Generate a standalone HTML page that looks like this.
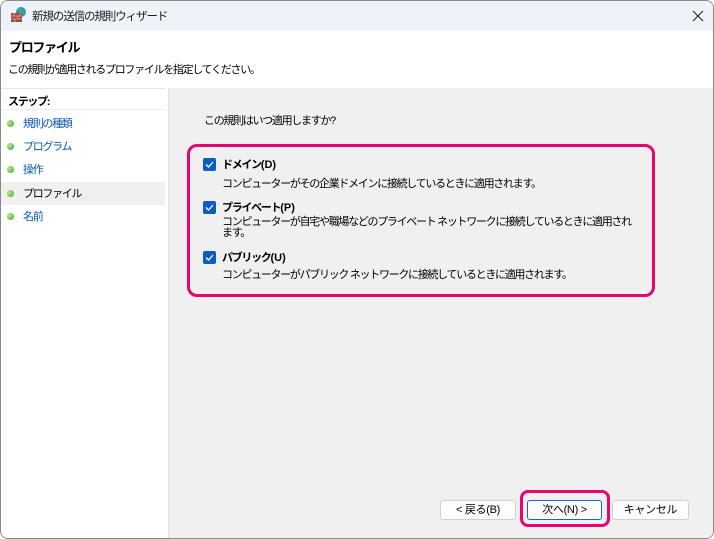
<!DOCTYPE html>
<html><head><meta charset="utf-8"><style>
*{margin:0;padding:0;box-sizing:border-box}
body{width:714px;height:539px;background:#fff;font-family:"Liberation Sans","Noto Sans CJK JP",sans-serif;font-size:11px;letter-spacing:-1.3px;color:#000;position:relative;overflow:hidden}
.win{position:absolute;left:0;top:0;width:714px;height:539px;border:1px solid #8a8a8a;border-radius:8px;overflow:hidden;background:#fff}
.title{position:absolute;left:0;top:0;width:712px;height:30px;background:#eef3f9}
.title span{position:absolute;left:31px;top:7px;font-size:11.5px;letter-spacing:-1.1px;color:#1a1a1a}
.abs{position:absolute;white-space:nowrap}
.left{position:absolute;left:0;top:87px;width:165px;height:450px;background:#fff;border-top:1px solid #e5e5e5}
.right{position:absolute;left:167px;top:87px;width:546px;height:450px;background:#f0f0f0;border-left:1px solid #e0e0e0}
.dot{position:absolute;left:6px;width:7px;height:7px;border-radius:50%;background:radial-gradient(circle at 35% 35%,#b6ec8a,#3fa02a)}
.lnk{color:#0a58b8}
.cb{position:absolute;width:13px;height:13px;background:#0b5cc4;border-radius:2px}
.cb svg{position:absolute;left:2px;top:3px}
.btn{position:absolute;top:499px;height:20px;border:1px solid #d0d0d0;border-radius:3px;background:#fdfdfd;text-align:center;line-height:18px;font-size:11px;letter-spacing:-0.3px}
.l{letter-spacing:0}
</style></head><body><div class="win">
<div class="title">
<svg style="position:absolute;left:9px;top:5px" width="17" height="17" viewBox="0 0 17 17">
<circle cx="11" cy="6" r="5" fill="#2c8fd8"/><path d="M8 3q3 1 5 4M9 9q3-3 6-2" stroke="#4db34a" stroke-width="2" fill="none"/>
<rect x="1" y="7" width="11" height="9" fill="#a8453a"/><path d="M1 10h11M1 13h11M4 7v3M8 10v3M5 13v3M10 7v3" stroke="#e0b0a0" stroke-width=".8"/></svg>
<span>新規の送信の規則ウィザード</span>
<svg style="position:absolute;left:691px;top:9px" width="12" height="12" viewBox="0 0 12 12"><path d="M1 1L11 11M11 1L1 11" stroke="#222" stroke-width="1.1"/></svg>
</div>
<div class="abs" style="left:8px;top:36px;font-size:13px;letter-spacing:-1.3px;font-weight:bold">プロファイル</div>
<div class="abs" style="left:7px;top:60px">この規則が適用されるプロファイルを指定してください。</div>
<div class="left">
<div class="abs" style="left:7px;top:4px;font-weight:bold">ステップ:</div>
<div style="position:absolute;left:0;top:20px;width:165px;height:1px;background:#eee"></div>
<div class="dot" style="top:31px"></div><div class="abs lnk" style="left:22px;top:26px">規則の種類</div>
<div class="dot" style="top:54px"></div><div class="abs lnk" style="left:22px;top:49px">プログラム</div>
<div class="dot" style="top:77px"></div><div class="abs lnk" style="left:22px;top:72px">操作</div>
<div style="position:absolute;left:0;top:93px;width:164px;height:23px;background:#f0f0f0"></div>
<div class="dot" style="top:101px"></div><div class="abs" style="left:22px;top:96px">プロファイル</div>
<div class="dot" style="top:124px"></div><div class="abs lnk" style="left:22px;top:119px">名前</div>
</div>
<div class="right"></div>
<div class="abs" style="left:203px;top:111px">この規則はいつ適用しますか?</div>
<div style="position:absolute;left:186px;top:143px;width:468px;height:153px;border:3px solid #e8066e;border-radius:10px"></div>
<div class="cb" style="left:202px;top:157px"><svg width="9" height="7" viewBox="0 0 9 7"><path d="M1 3.5L3.5 6L8 1" stroke="#fff" stroke-width="1.3" fill="none"/></svg></div>
<div class="abs" style="left:221px;top:155px;font-weight:bold">ドメイン<span class="l">(D)</span></div>
<div class="abs" style="left:221px;top:174px">コンピューターがその企業ドメインに接続しているときに適用されます。</div>
<div class="cb" style="left:202px;top:200px"><svg width="9" height="7" viewBox="0 0 9 7"><path d="M1 3.5L3.5 6L8 1" stroke="#fff" stroke-width="1.3" fill="none"/></svg></div>
<div class="abs" style="left:221px;top:198px;font-weight:bold">プライベート<span class="l">(P)</span></div>
<div class="abs" style="left:221px;top:216px;line-height:11px">コンピューターが自宅や職場などのプライベート ネットワークに接続しているときに適用され<br>ます。</div>
<div class="cb" style="left:202px;top:250px"><svg width="9" height="7" viewBox="0 0 9 7"><path d="M1 3.5L3.5 6L8 1" stroke="#fff" stroke-width="1.3" fill="none"/></svg></div>
<div class="abs" style="left:221px;top:248px;font-weight:bold">パブリック<span class="l">(U)</span></div>
<div class="abs" style="left:221px;top:265px">コンピューターがパブリック ネットワークに接続しているときに適用されます。</div>
<div class="btn" style="left:439px;width:76px">&lt; 戻る(B)</div>
<div style="position:absolute;left:519px;top:489px;width:90px;height:37px;border:3px solid #e8066e;border-radius:8px"></div>
<div class="btn" style="left:526px;width:75px;border-color:#1a66c6">次へ(N) &gt;</div>
<div class="btn" style="left:611px;width:77px">キャンセル</div>
</div></body></html>
